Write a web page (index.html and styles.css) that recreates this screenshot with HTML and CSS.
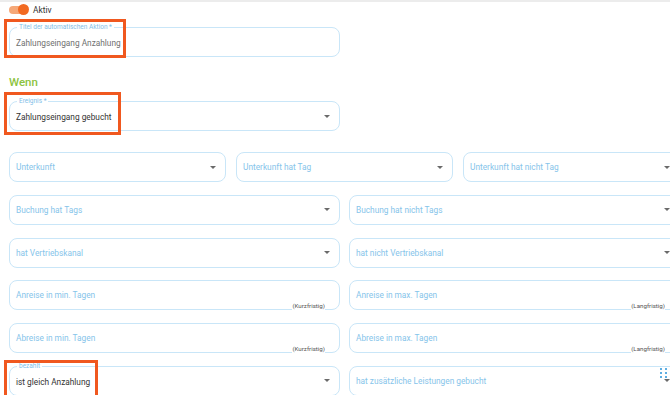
FILE: index.html
```html
<!DOCTYPE html>
<html lang="de">

<head>
    <meta charset="UTF-8">
    <meta name="viewport" content="width=device-width, initial-scale=1.0">
    <title>Automatische Aktion</title>
    <link rel="stylesheet" href="styles.css">
</head>

<body>
    <div class="page">
        <div class="switch-row">
            <span class="switch"><span class="knob"></span></span>
            <span>Aktiv</span>
        </div>

        <div class="field labeled wide title-field">
            <label>Titel der automatischen Aktion *</label>
            <span class="value muted">Zahlungseingang Anzahlung</span>
            <span class="mark mark-title"></span>
        </div>

        <h2>Wenn</h2>

        <div class="field labeled wide event-field">
            <label>Ereignis *</label>
            <span class="value">Zahlungseingang gebucht</span>
            <span class="arrow"></span>
            <span class="mark mark-event"></span>
        </div>

        <div class="rows">
            <div class="row three">
                <div class="field"><span class="placeholder">Unterkunft</span><span class="arrow"></span></div>
                <div class="field"><span class="placeholder">Unterkunft hat Tag</span><span class="arrow"></span></div>
                <div class="field"><span class="placeholder">Unterkunft hat nicht Tag</span><span class="arrow"></span></div>
            </div>
            <div class="row">
                <div class="field"><span class="placeholder">Buchung hat Tags</span><span class="arrow"></span></div>
                <div class="field"><span class="placeholder">Buchung hat nicht Tags</span><span class="arrow"></span></div>
            </div>
            <div class="row">
                <div class="field"><span class="placeholder">hat Vertriebskanal</span><span class="arrow"></span></div>
                <div class="field"><span class="placeholder">hat nicht Vertriebskanal</span><span class="arrow"></span></div>
            </div>
            <div class="row">
                <div class="field"><span class="placeholder">Anreise in min. Tagen</span><span class="hint">(Kurzfristig)</span></div>
                <div class="field"><span class="placeholder">Anreise in max. Tagen</span><span class="hint">(Langfristig)</span></div>
            </div>
            <div class="row">
                <div class="field"><span class="placeholder">Abreise in min. Tagen</span><span class="hint">(Kurzfristig)</span></div>
                <div class="field"><span class="placeholder">Abreise in max. Tagen</span><span class="hint">(Langfristig)</span></div>
            </div>
            <div class="row">
                <div class="field labeled">
                    <label>bezahlt</label>
                    <span class="value">ist gleich Anzahlung</span>
                    <span class="arrow"></span>
                    <span class="mark mark-paid"></span>
                </div>
                <div class="field">
                    <span class="placeholder">hat zusätzliche Leistungen gebucht</span>
                    <span class="arrow"></span>
                    <span class="grip"><i></i><i></i><i></i><i></i><i></i><i></i></span>
                </div>
            </div>
        </div>
    </div>
</body>

</html>
```

FILE: styles.css
```css
body {
    margin: 0;
    font-family: Roboto, "Liberation Sans", sans-serif;
    background: #fff;
    overflow: hidden;
    border-top: 2px solid #ececec;
}

.page {
    width: 671px;
    padding-left: 9px;
}

.switch-row {
    display: flex;
    align-items: center;
    gap: 6px;
    height: 15px;
    font-size: 8.4px;
    color: #333;
}

.switch {
    position: relative;
    width: 18px;
    height: 8px;
    border-radius: 4px;
    background: #f6a878;
}

.knob {
    position: absolute;
    right: -2px;
    top: -1.5px;
    width: 11px;
    height: 11px;
    border-radius: 50%;
    background: #f26a22;
}

.field {
    position: relative;
    box-sizing: border-box;
    height: 30px;
    display: flex;
    align-items: center;
    padding: 0 8px 0 6px;
    border: 1px solid #c9e6f8;
    border-radius: 8px;
    font-size: 8.3px;
}

.wide {
    width: 331px;
}

.title-field {
    margin-top: 10px;
}

.labeled .value {
    padding-top: 2px;
}

.field label {
    position: absolute;
    left: 7px;
    top: -5px;
    padding: 0 2px;
    background: #fff;
    font-size: 6.5px;
    line-height: 8px;
    color: #7fc0e8;
}

.value {
    flex: 1;
    color: #333;
}

.value.muted {
    color: #707070;
}

.placeholder {
    flex: 1;
    color: #86c4ea;
    white-space: nowrap;
}

.arrow {
    width: 0;
    height: 0;
    margin-right: 1px;
    border-left: 3px solid transparent;
    border-right: 3px solid transparent;
    border-top: 3px solid #6a6a6a;
}

.hint {
    align-self: flex-end;
    margin-right: 6px;
    margin-bottom: -1px;
    font-size: 6.2px;
    color: #555;
    background: #fff;
}

h2 {
    margin: 17px 0 11px;
    font-size: 11.5px;
    line-height: 16px;
    font-weight: 500;
    color: #8cc340;
}

.rows {
    margin-top: 21px;
    display: flex;
    flex-direction: column;
    gap: 12.8px;
}

.row {
    display: grid;
    grid-template-columns: 331px 331px;
    column-gap: 9px;
}

.row.three {
    grid-template-columns: 217px 217px 217px;
    column-gap: 10px;
}

/* orange annotation frames */
.mark {
    position: absolute;
    border: 3px solid #f0581f;
    pointer-events: none;
}

.mark-title {
    left: -6px;
    top: -9px;
    width: 116px;
    height: 33px;
}

.mark-event {
    left: -6px;
    top: -10px;
    width: 111px;
    height: 37px;
}

.mark-paid {
    left: -6px;
    top: -7px;
    width: 88px;
    height: 40px;
}

.grip {
    position: absolute;
    right: 12px;
    top: 1px;
    display: grid;
    grid-template-columns: 2px 2px;
    gap: 2px 3px;
}

.grip i {
    width: 2px;
    height: 2px;
    background: #5eaee2;
}
```
